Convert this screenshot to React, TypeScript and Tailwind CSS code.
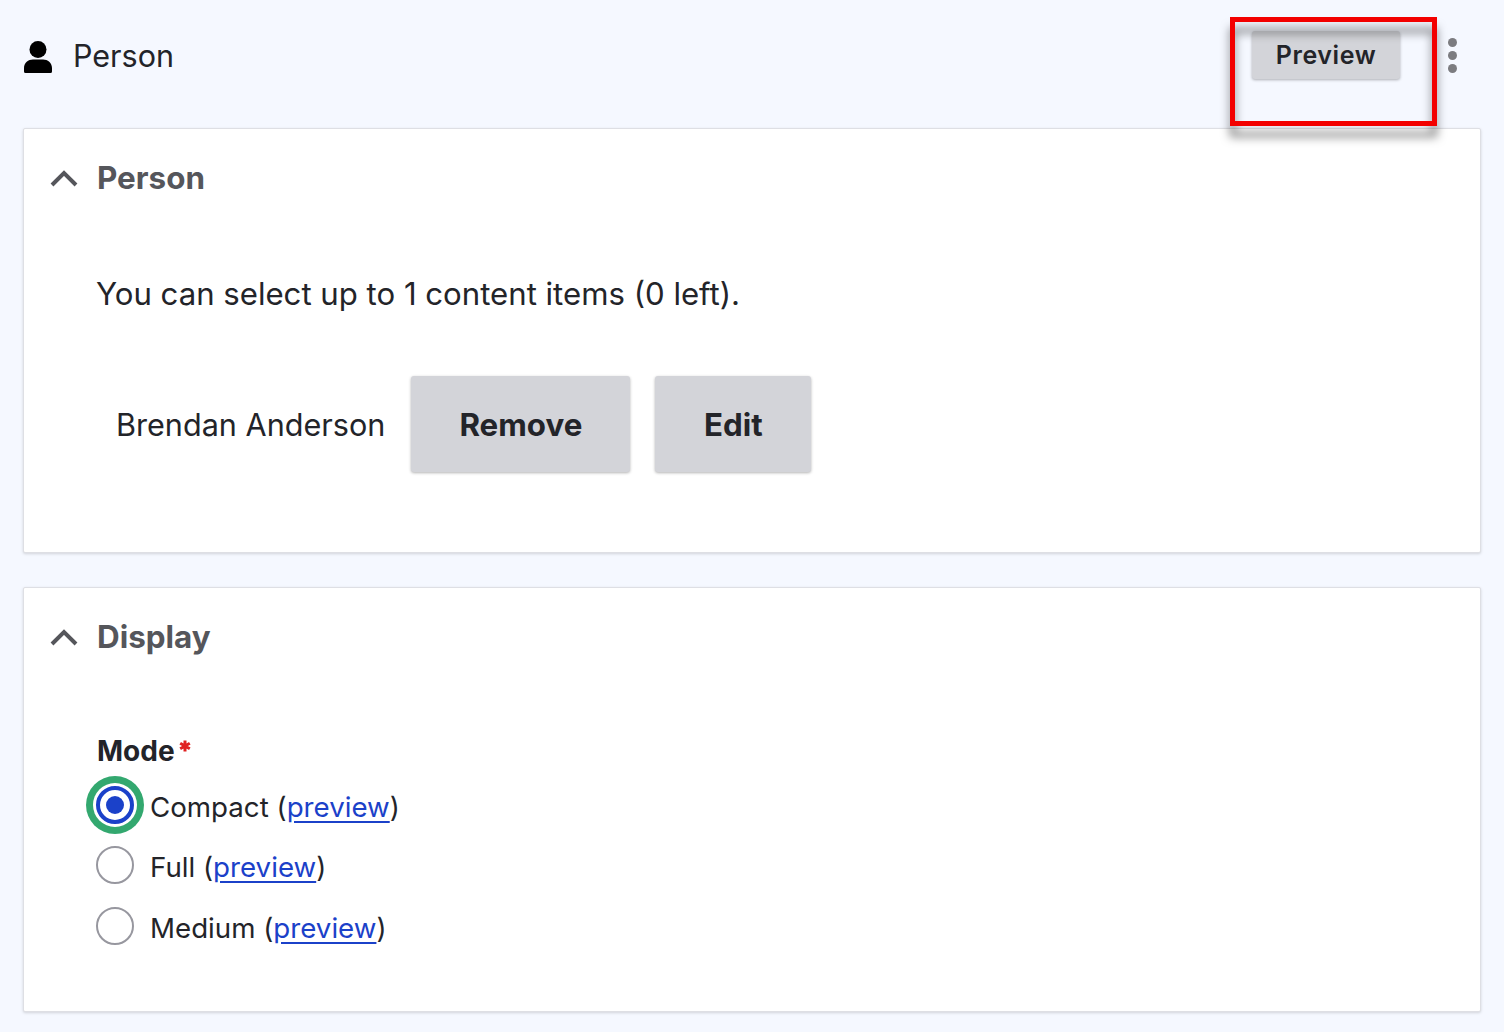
export default function App() {
  return (
    <div className="relative h-[1032px] w-[1504px] overflow-hidden bg-[#f5f8ff] font-['Inter',sans-serif] text-[#232429]">
      <header className="flex h-[128px] items-start pl-[24px] pr-[47px] pt-[31px]">
        <div className="flex h-[50px] flex-1 items-center">
          <svg className="mt-[2px] h-[32px] w-[28px]" viewBox="0 0 28 32" fill="#000" aria-hidden="true">
            <circle cx="14" cy="8.600" r="8.500" />
            <path d="M0 30.500v-3.500C0 21.800 4.300 18.500 9 18.500h10c4.700 0 9 3.300 9 8.500v3.500a1.500 1.500 0 0 1-1.500 1.500h-25A1.500 1.500 0 0 1 0 30.500z" />
          </svg>
          <span className="ml-[21px] text-[30.500px] leading-none">Person</span>
        </div>
        <button className="h-[48px] w-[148px] rounded-[3px] bg-[#d3d4d9] pt-[2px] text-[25px] font-semibold tracking-[0.6px] text-[#232429] shadow-[0_1px_3px_rgba(0,0,0,0.3)]">
          Preview
        </button>
        <div className="ml-[47px] flex h-[48px] w-[10px] flex-col items-center justify-center gap-[4px]">
          <span className="h-[9px] w-[9px] rounded-full bg-[#7c7c80]" />
          <span className="h-[9px] w-[9px] rounded-full bg-[#7c7c80]" />
          <span className="h-[9px] w-[9px] rounded-full bg-[#7c7c80]" />
        </div>
      </header>

      <section className="mx-[23px] h-[425px] rounded-[2px] border border-[#dedfe4] bg-white shadow-[0_1px_3px_rgba(0,0,0,0.15)]">
        <div className="flex h-[98px] items-center pl-[25px]">
          <Chevron />
          <h2 className="ml-[18px] pt-[2px] text-[31.400px] font-bold leading-none text-[#55565b]">Person</h2>
        </div>
        <p className="ml-[72px] mt-[47px] text-[31.150px] leading-[40px]">You can select up to 1 content items (0 left).</p>
        <div className="ml-[92px] mt-[62px] flex items-center">
          <span className="pt-[2px] text-[30.600px] leading-none">Brendan Anderson</span>
          <button className="ml-[26px] h-[96px] w-[219px] rounded-[3px] bg-[#d3d4d9] pt-[2px] text-[31.300px] font-bold text-[#232429] shadow-[0_1px_3px_rgba(0,0,0,0.3)]">Remove</button>
          <button className="ml-[25px] h-[96px] w-[156px] rounded-[3px] bg-[#d3d4d9] pt-[2px] text-[31.300px] font-bold text-[#232429] shadow-[0_1px_3px_rgba(0,0,0,0.3)]">Edit</button>
        </div>
      </section>

      <section className="mx-[23px] mt-[34px] h-[425px] rounded-[2px] border border-[#dedfe4] bg-white shadow-[0_1px_3px_rgba(0,0,0,0.15)]">
        <div className="flex h-[98px] items-center pl-[25px]">
          <Chevron />
          <h2 className="ml-[18px] pt-[2px] text-[31.400px] font-bold leading-none text-[#55565b]">Display</h2>
        </div>
        <div className="ml-[73px] mt-[49px] flex items-start text-[28px] font-bold leading-[32px]">
          Mode
          <svg className="ml-[4px] mt-[5px] h-[12px] w-[12px]" viewBox="0 0 12 12" stroke="#e02020" strokeWidth="3" aria-hidden="true">
            <path d="M6 0.500v11M1.200 3.200l9.600 5.600M10.800 3.200l-9.600 5.600" />
          </svg>
        </div>
        <div className="ml-[72px] mt-[8px] flex flex-col">
          <Option label="Compact" checked height="h-[60px]" />
          <Option label="Full" height="h-[60px]" />
          <Option label="Medium" height="h-[61px]" />
        </div>
      </section>

      <div className="pointer-events-none absolute left-[1230px] top-[17px] h-[109px] w-[207px] border-[5px] border-[#f30000] drop-shadow-[0_11px_5px_rgba(0,0,0,0.5)]" />
    </div>
  );
}

function Chevron() {
  return (
    <svg className="h-[20px] w-[30px]" viewBox="0 0 30 20" fill="none" stroke="#55565b" strokeWidth="4" aria-hidden="true">
      <path d="M3 17 15 5l12 12" />
    </svg>
  );
}

function Option({ label, height, checked = false }: { label: string; height: string; checked?: boolean }) {
  return (
    <div className={`flex items-center ${height}`}>
      {checked ? (
        <span className="relative flex h-[38px] w-[38px] items-center justify-center rounded-full border-[4px] border-[#1b41c9] bg-white shadow-[0_0_0_3px_#fff,0_0_0_10px_#33a86f]">
          <span className="h-[18px] w-[18px] rounded-full bg-[#1b41c9]" />
        </span>
      ) : (
        <span className="h-[38px] w-[38px] rounded-full border-2 border-[#97979f] bg-white" />
      )}
      <span className="ml-[16px] mt-[6px] text-[27.700px] leading-none">
        {label} (<a href="#" className="text-[#1b41c9] underline underline-offset-[4px]">preview</a>)
      </span>
    </div>
  );
}
